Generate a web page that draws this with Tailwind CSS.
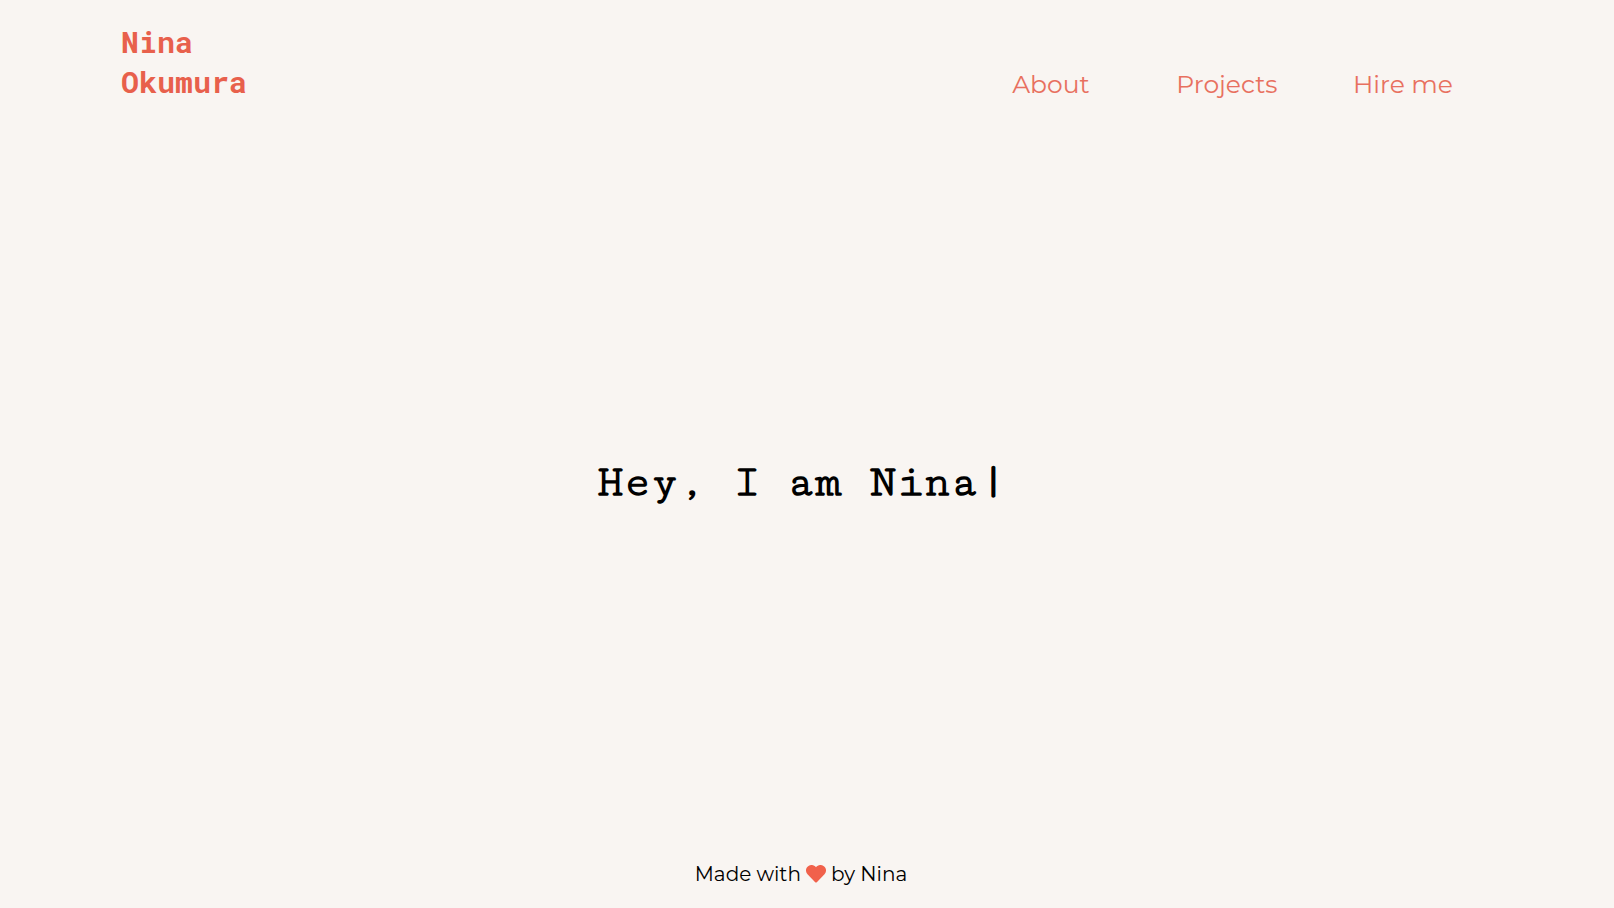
<!DOCTYPE html>
<html lang="en">
<head>
<meta charset="utf-8">
<meta name="viewport" content="width=device-width, initial-scale=1">
<title>Nina Okumura</title>
<script src="https://cdn.jsdelivr.net/npm/@tailwindcss/browser@4"></script>
</head>
<body class="flex min-h-screen flex-col bg-[#f9f5f2] font-['Montserrat','Inter',sans-serif] text-black">
  <header class="flex items-end justify-between px-[7.5%] pt-[22px]">
    <a href="#" class="font-['Roboto_Mono','Liberation_Mono',monospace] text-[30px] leading-10 font-bold text-[#e8604c]">Nina<br>Okumura</a>
    <nav class="grid w-[530px] grid-cols-3 pr-0.5 text-center text-[25px] leading-9 text-[#e8705f]">
      <a href="#about">About</a>
      <a href="#projects">Projects</a>
      <a href="#hire">Hire me</a>
    </nav>
  </header>
  <main class="flex flex-1 items-center justify-center pt-1 pr-3">
    <h1 class="font-['Cutive_Mono','Liberation_Mono',monospace] text-[45px] leading-[60px] font-bold whitespace-nowrap">Hey, I am Nina<span>|</span></h1>
  </main>
  <footer class="flex items-center justify-center gap-[5px] pr-3 pb-5 text-xl leading-7">
    <span>Made with</span>
    <svg class="h-[18px] w-5 text-[#f1614b]" viewBox="0 0 20 18" fill="currentColor" role="img" aria-label="love"><path d="M10 2.2C7.9-.5 4.1-.7 1.8 1.4-.7 3.7-.5 7.1 1.5 9.2L9.2 17.2Q10 18 10.8 17.2L18.5 9.2C20.5 7.1 20.7 3.7 18.2 1.4 15.9-.7 12.1-.5 10 2.2Z"/></svg>
    <span>by Nina</span>
  </footer>
</body>
</html>
